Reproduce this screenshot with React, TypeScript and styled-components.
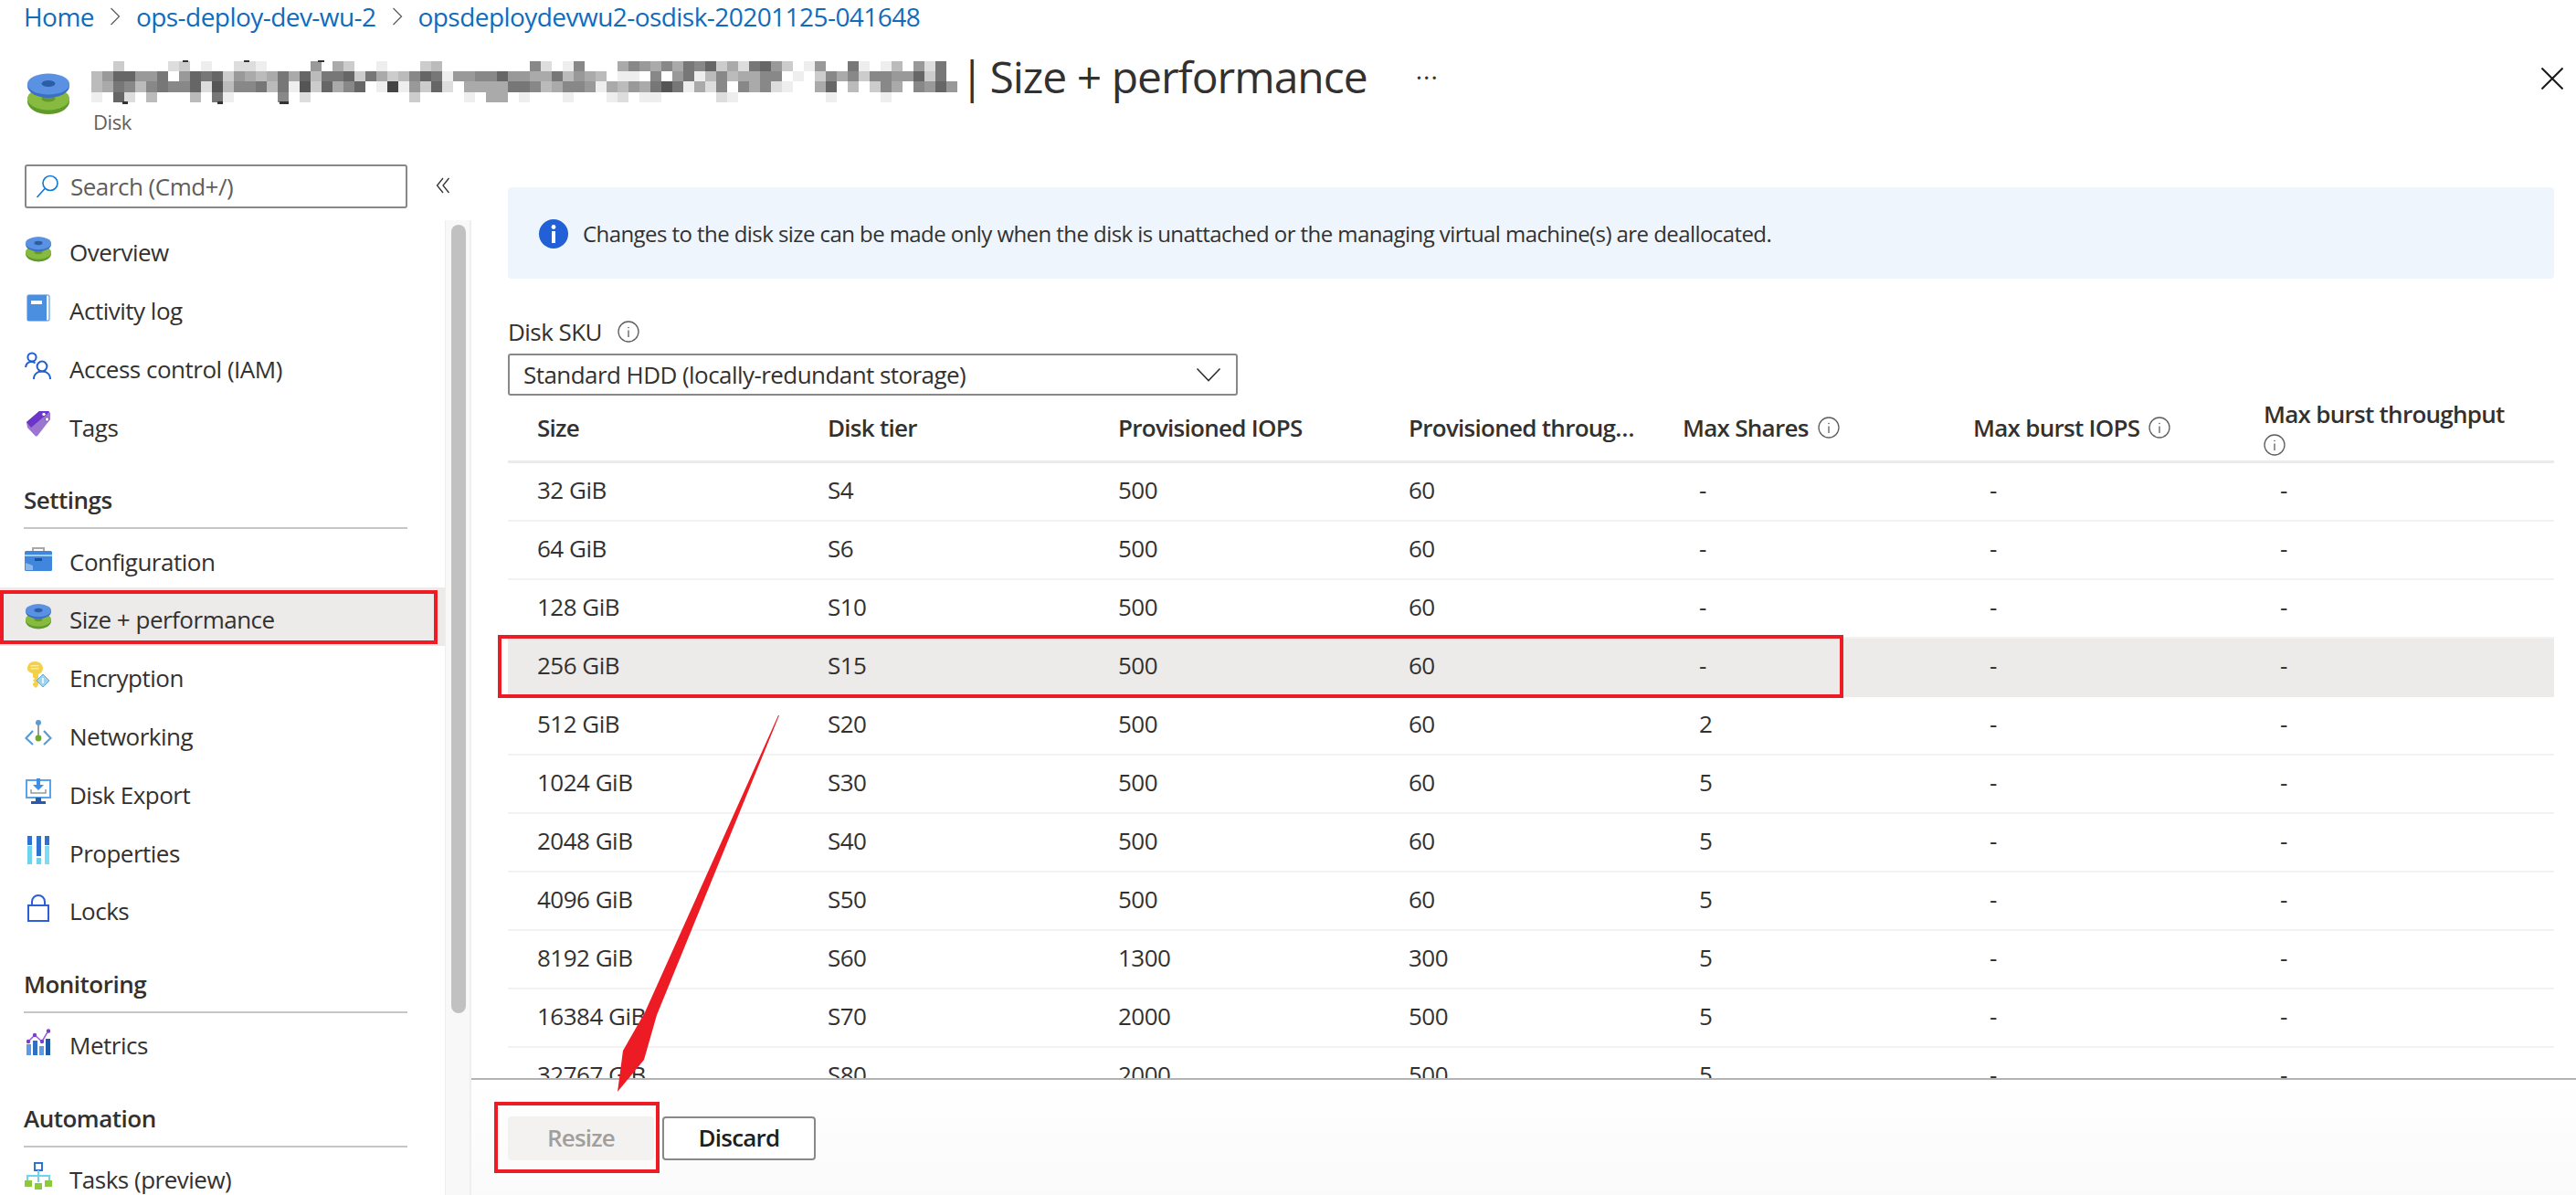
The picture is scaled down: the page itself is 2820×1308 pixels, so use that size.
import React from "react";
import styled, { createGlobalStyle } from "styled-components";

const GlobalStyle = createGlobalStyle`
  html, body {
    margin: 0;
    padding: 0;
    background: #fff;
  }
  body {
    font-family: "Open Sans", "Noto Sans", sans-serif;
    color: #323130;
  }
  * {
    box-sizing: border-box;
  }
`;

const Page = styled.div`
  position: relative;
  display: flex;
  flex-direction: column;
  width: 2820px;
  height: 1308px;
  overflow: hidden;
  background: #fff;
`;

const Breadcrumbs = styled.nav`
  display: flex;
  align-items: center;
  height: 36px;
  padding-left: 26px;
  gap: 17px;
  font-size: 28px;
  letter-spacing: -0.55px;
  color: #0f6cbd;
`;

const Crumb = styled.span`
  white-space: nowrap;
`;

const TitleRow = styled.header`
  display: flex;
  height: 142px;
  padding: 30px 14px 0 30px;
`;

const TitleIcon = styled.div`
  width: 46px;
  margin-right: 24px;
  padding-top: 14px;
`;

const TitleBlock = styled.div`
  display: flex;
  flex-direction: column;
`;

const TitleLine = styled.div`
  display: flex;
  align-items: flex-start;
  height: 50px;
`;

const TitlePipe = styled.span`
  margin: 0 7px 0 3px;
  font-size: 48px;
  line-height: 36px;
  letter-spacing: -1px;
  color: #323130;
`;

const TitleText = styled.h1`
  margin: 0;
  font-size: 48px;
  font-weight: 400;
  line-height: 36px;
  letter-spacing: -1px;
  color: #323130;
  white-space: nowrap;
`;

const MoreDots = styled.span`
  margin-left: 53px;
  font-size: 28px;
  line-height: 36px;
  letter-spacing: 1px;
  color: #323130;
`;

const Subtitle = styled.div`
  margin: 2px 0 0 2px;
  font-size: 22px;
  line-height: 30px;
  letter-spacing: -0.4px;
  color: #605e5c;
`;

const CloseButton = styled.div`
  margin-left: auto;
  padding-top: 8px;
`;

const Body = styled.div`
  display: flex;
  flex: 1;
  min-height: 0;
`;

const LeftPane = styled.aside`
  display: flex;
  flex-direction: column;
  width: 516px;
  flex-shrink: 0;
`;

const SearchRow = styled.div`
  display: flex;
  align-items: flex-start;
  height: 63px;
  padding: 2px 0 0 27px;
`;

const SearchBox = styled.div`
  display: flex;
  align-items: center;
  gap: 12px;
  width: 419px;
  height: 48px;
  padding-left: 10px;
  border: 2px solid #8a8886;
  border-radius: 3px;
  font-size: 26px;
  letter-spacing: -0.5px;
  color: #605e5c;
`;

const CollapseButton = styled.div`
  margin: 14px 0 0 31px;
`;

const NavArea = styled.div`
  display: flex;
  flex: 1;
  min-height: 0;
`;

const NavList = styled.div`
  width: 487px;
  flex-shrink: 0;
  overflow: hidden;
`;

const NavItem = styled.div<{ $active?: boolean }>`
  display: flex;
  align-items: center;
  height: 63.8px;
  padding: 7px 0 0 26px;
  font-size: 26px;
  letter-spacing: -0.5px;
  white-space: nowrap;
  color: #323130;
  background: ${(p) => (p.$active ? "#edebe9" : "transparent")};
`;

const NavIcon = styled.span`
  display: flex;
  justify-content: center;
  width: 32px;
  margin-right: 18px;
  margin-top: -7px;
`;

const SectionTitle = styled.div`
  display: flex;
  align-items: flex-end;
  height: 83px;
  margin: 0 41px 0 26px;
  padding-bottom: 12px;
  border-bottom: 2px solid #c8c6c4;
  font-size: 26px;
  font-weight: 600;
  line-height: 36px;
  letter-spacing: -0.5px;
  color: #323130;
`;

const ScrollGutter = styled.div`
  flex: 1;
  padding: 5px 4px 0 6px;
  background: #f8f8f8;
  border-left: 1px solid #eeeeee;
  border-right: 2px solid #eeeeee;
`;

const ScrollThumb = styled.div`
  height: 863px;
  border-radius: 8px;
  background: #c1c1c1;
`;

const Main = styled.main`
  display: flex;
  flex-direction: column;
  flex: 1;
  min-width: 0;
`;

const Content = styled.div`
  flex: 1;
  min-height: 0;
  overflow: hidden;
  padding: 27px 24px 0 40px;
`;

const InfoBanner = styled.div`
  display: flex;
  align-items: flex-start;
  gap: 16px;
  height: 100px;
  padding: 35px 0 0 34px;
  border-radius: 4px;
  background: #eff5fd;
  font-size: 24px;
  line-height: 32px;
  letter-spacing: -0.57px;
  color: #323130;
`;

const FieldLabel = styled.label`
  display: flex;
  align-items: center;
  gap: 17px;
  height: 32px;
  margin-top: 42px;
  font-size: 26px;
  letter-spacing: -0.55px;
  color: #323130;
`;

const SelectBox = styled.div`
  display: flex;
  align-items: center;
  justify-content: space-between;
  width: 799px;
  height: 46px;
  margin-top: 8px;
  padding: 0 16px 0 15px;
  border: 2px solid #8a8886;
  border-radius: 3px;
  font-size: 26px;
  letter-spacing: -0.56px;
  color: #323130;
`;

const COLUMNS = "318px 318px 318px 318px 318px 318px 1fr";

const TableHead = styled.div`
  display: grid;
  grid-template-columns: ${COLUMNS};
  height: 74px;
  padding-bottom: 2px;
  border-bottom: 3px solid #edebe9;
`;

const HeadCell = styled.div<{ $tight?: boolean }>`
  display: flex;
  align-items: center;
  flex-wrap: wrap;
  align-content: center;
  min-width: 0;
  gap: 5px 10px;
  padding: 0 28px 0 ${(p) => (p.$tight ? "14px" : "32px")};
  font-size: 26px;
  font-weight: 600;
  line-height: 34px;
  letter-spacing: -0.72px;
  color: #323130;
`;

const Truncated = styled.span`
  overflow: hidden;
  max-width: 100%;
  white-space: nowrap;
  text-overflow: ellipsis;
`;

const TableRow = styled.div<{ $selected?: boolean }>`
  display: grid;
  grid-template-columns: ${COLUMNS};
  align-items: center;
  height: 64px;
  padding-bottom: 4px;
  border-bottom: 2px solid ${(p) => (p.$selected ? "#edebe9" : "#f3f2f1")};
  background: ${(p) => (p.$selected ? "#edebe9" : "transparent")};
`;

const Cell = styled.div`
  padding-left: 32px;
  font-size: 26px;
  letter-spacing: -0.5px;
  color: #323130;
`;

const Footer = styled.footer`
  display: flex;
  gap: 9px;
  height: 128px;
  padding: 40px 0 0 40px;
  border-top: 2px solid #b3b3b3;
  background: linear-gradient(#ffffff, #fafafa);
`;

const Button = styled.button<{ $disabled?: boolean; $width: number }>`
  width: ${(p) => p.$width}px;
  height: 48px;
  padding: 0 0 2px;
  border: 2px solid ${(p) => (p.$disabled ? "#f3f2f1" : "#8a8886")};
  border-radius: 4px;
  background: ${(p) => (p.$disabled ? "#f3f2f1" : "#ffffff")};
  color: ${(p) => (p.$disabled ? "#a19f9d" : "#201f1e")};
  font-family: inherit;
  font-size: 26px;
  font-weight: 600;
  letter-spacing: -0.8px;
`;

// red marks someone drew on top of the screenshot
const Callout = styled.div<{ $x: number; $y: number; $w: number; $h: number }>`
  position: absolute;
  left: ${(p) => p.$x}px;
  top: ${(p) => p.$y}px;
  width: ${(p) => p.$w}px;
  height: ${(p) => p.$h}px;
  border: 4px solid #ed1c24;
  pointer-events: none;
`;

const ArrowLayer = styled.svg`
  position: absolute;
  left: 0;
  top: 0;
  pointer-events: none;
`;

const MOSAIC = [
  "ffcffffdcfeffddeffff9facffefffcbffffffff8dfe8fffa89a8a786cad769cfe9ff7efebf9d7f",
  "b966997f9676c9aba7a6b776c7acb867e9988699aa7b9abfeef8f97eb8baa88fefc8a8c88996c7f",
  "ba78b87886d5b887b7e5c6a86fe4e9c6dfaaaa778ba889eab9a757ead8f8a8deffa6fbfc8af8969",
  "ef6dfbfffbf7effff8fdfffffffffcffffefaafefffefffedfeefffffdeffffffffeffffefffff",
];
const MOSAIC_Y = [0, 11, 22, 34];
const MOSAIC_H = [11, 11, 12, 11];
const MOSAIC_TICKS = [
  [100, 0, 6, 2],
  [167, 0, 6, 2],
  [248, 0, 7, 2],
  [34, 45, 6, 3],
  [138, 45, 6, 3],
  [206, 45, 10, 3],
];

// the disk name was pixelated out in the original picture
const BlurredName = () => (
  <svg width="948" height="50" viewBox="0 0 948 50">
    {MOSAIC.map((row, r) =>
      row.split("").map((c, i) => {
        const v = parseInt(c, 16) * 17;
        if (v === 255) return null;
        return (
          <rect
            key={`${r}-${i}`}
            x={i * 12}
            y={MOSAIC_Y[r] + 1}
            width="12"
            height={MOSAIC_H[r]}
            fill={`rgb(${v},${v},${v})`}
          />
        );
      })
    )}
    {MOSAIC_TICKS.map((t, i) => (
      <rect key={i} x={t[0]} y={t[1]} width={t[2]} height={t[3]} fill="#333" />
    ))}
  </svg>
);

const DiskIcon = ({ size }: { size: number }) => (
  <svg width={size} height={size} viewBox="0 0 46 46">
    <ellipse cx="23" cy="31" rx="23" ry="14" fill="#5f9a2b" />
    <ellipse cx="23" cy="28" rx="23" ry="12.5" fill="#86bb3f" />
    <ellipse cx="23" cy="28" rx="7.5" ry="3.5" fill="#65982c" />
    <ellipse cx="23" cy="14" rx="23" ry="13" fill="#3a70c4" />
    <ellipse cx="23" cy="12" rx="23" ry="11.5" fill="#5a91e3" />
    <ellipse cx="23" cy="11.5" rx="7.5" ry="3.5" fill="#2b5ea3" />
  </svg>
);

const BookIcon = () => (
  <svg width="26" height="30" viewBox="0 0 26 30">
    <rect x="1" y="1" width="24" height="28" rx="2" fill="none" stroke="#7fb0e8" strokeWidth="1.5" />
    <path d="M1 3a2 2 0 0 1 2-2h19v28H1z" fill="#4a8fe0" />
    <rect x="5" y="7" width="12" height="4" fill="#fff" />
  </svg>
);

const PeopleIcon = () => (
  <svg width="30" height="30" viewBox="0 0 30 30" fill="none" stroke="#1f5fd0" strokeWidth="2">
    <circle cx="8" cy="6" r="4.6" />
    <path d="M1 17c.6-4 3-6 6.500-6 1.500 0 3 .5 4 1.500" />
    <circle cx="19" cy="16" r="5.400" />
    <path d="M10 30c0-5.500 4-8.500 9-8.500s9 3 9 8.500" />
  </svg>
);

const TagIcon = () => (
  <svg width="28" height="30" viewBox="0 0 28 30">
    <path d="M1 13 15 1h10l2 2v7L13 28a2 2 0 0 1-2.500 0L2 19z" fill="#9a76cf" />
    <path d="M1 13 15 1h10l1 1L6 19z" fill="#6c35c9" />
    <circle cx="20" cy="4.500" r="2.200" fill="#fff" stroke="#6c35c9" />
    <circle cx="23.500" cy="10" r="2.200" fill="#fff" stroke="#7a55b8" />
  </svg>
);

const BriefcaseIcon = () => (
  <svg width="30" height="27" viewBox="0 0 30 27">
    <path d="M9 6V2h12v4" fill="none" stroke="#a8a8a8" strokeWidth="2" />
    <rect x="0" y="5" width="30" height="22" rx="1.500" fill="#3f86dc" />
    <rect x="0" y="9" width="30" height="2" fill="#9fd0f5" />
    <rect x="11" y="13" width="8" height="3" fill="#1f4f96" />
    <path d="M1 18l8 3v5H1z" fill="#8ab7ea" />
  </svg>
);

const KeyIcon = () => (
  <svg width="26" height="30" viewBox="0 0 26 30">
    <path d="M9 0c5 0 9 3 9 7.500 0 3-2 5.500-5 6.500v12l-3 3-3-3v-2l2-1-2-2 2-2-2-2v-4C3.500 12.500 1 10.500 1 7.500 1 3 4.500 0 9 0z" fill="#f3d048" />
    <rect x="4.500" y="4" width="9" height="1.500" fill="#fbeaa0" />
    <rect x="4.500" y="7" width="9" height="1.500" fill="#fbeaa0" />
    <path d="M18 14l7 7-7 7-7-7z" fill="#9fd3ee" stroke="#5fa8d8" />
    <path d="M18 18v6" stroke="#fff" strokeWidth="1.500" />
  </svg>
);

const NetworkIcon = () => (
  <svg width="30" height="28" viewBox="0 0 30 28" fill="none">
    <path d="M9 12 1.500 20 9 27M21 12l7.500 8-7.500 7" stroke="#5a9bd4" strokeWidth="2.200" />
    <path d="M15 3v17" stroke="#7a7a7a" strokeWidth="1.500" />
    <circle cx="15" cy="3" r="3" fill="#5a9bd4" />
    <circle cx="15" cy="20" r="3.400" fill="#6fa82a" />
  </svg>
);

const MonitorIcon = () => (
  <svg width="28" height="28" viewBox="0 0 28 28">
    <rect x="1" y="2" width="26" height="19" fill="#fff" stroke="#5ba3ea" strokeWidth="2" />
    <rect x="11" y="21" width="6" height="4" fill="#2a5aa8" />
    <rect x="6" y="25" width="16" height="3" fill="#2a5aa8" />
    <path d="M12 0h4v7h4l-6 6-6-6h4z" fill="#3f8ee6" />
    <path d="M6 12v4h16v-4" fill="none" stroke="#9a9a9a" strokeWidth="1.500" />
  </svg>
);

const PropertiesIcon = () => (
  <svg width="24" height="31" viewBox="0 0 24 31">
    <rect x="0" y="0" width="5" height="10" fill="#2f72d0" />
    <rect x="0" y="11" width="5" height="20" fill="#6fd3ee" />
    <rect x="10" y="0" width="5" height="22" fill="#2f72d0" />
    <rect x="10" y="24" width="5" height="7" fill="#6fd3ee" />
    <rect x="19" y="0" width="5" height="10" fill="#2f72d0" />
    <rect x="19" y="11" width="5" height="20" fill="#7adcf5" />
  </svg>
);

const LockIcon = () => (
  <svg width="24" height="30" viewBox="0 0 24 30" fill="none" stroke="#2a5fd8" strokeWidth="2">
    <rect x="1" y="12" width="22" height="17" />
    <path d="M5 12V8a7 7 0 0 1 14 0v4" />
  </svg>
);

const MetricsIcon = () => (
  <svg width="26" height="29" viewBox="0 0 26 29">
    <rect x="0" y="17" width="5" height="12" fill="#5c9be8" />
    <rect x="7" y="13" width="5" height="16" fill="#2f6fc4" />
    <rect x="14" y="19" width="5" height="10" fill="#5c9be8" />
    <rect x="21" y="11" width="5" height="18" fill="#1f5aa8" />
    <path d="M2 14l7-7 8 7 7-12" fill="none" stroke="#9a5fdc" strokeWidth="1.500" />
    <circle cx="2" cy="14" r="2.200" fill="#7a3fd0" />
    <circle cx="9" cy="7" r="2.200" fill="#7a3fd0" />
    <circle cx="17" cy="14" r="2.200" fill="#7a3fd0" />
    <circle cx="24" cy="2.500" r="2.200" fill="#7a3fd0" />
  </svg>
);

const TasksIcon = () => (
  <svg width="30" height="30" viewBox="0 0 30 30">
    <rect x="11" y="1" width="8" height="8" fill="#fff" stroke="#2f72d0" strokeWidth="2" />
    <path d="M15 9v6M3 21v-6h24v6M15 15v7" fill="none" stroke="#6fd3ee" strokeWidth="2" />
    <rect x="0" y="20" width="8" height="7" fill="#8fc73e" />
    <rect x="11" y="23" width="8" height="7" fill="#8fc73e" />
    <rect x="22" y="20" width="8" height="7" fill="#8fc73e" />
  </svg>
);

const InfoDot = () => (
  <svg width="24" height="24" viewBox="0 0 24 24" fill="none" stroke="#605e5c">
    <circle cx="12" cy="12" r="11" strokeWidth="1.300" />
    <path d="M12 10.500V18" strokeWidth="1.300" />
    <circle cx="12" cy="7.500" r="0.800" fill="#605e5c" stroke="none" />
  </svg>
);

const SolidInfo = () => (
  <svg width="32" height="32" viewBox="0 0 32 32">
    <circle cx="16" cy="16" r="16" fill="#2160d6" />
    <rect x="14" y="13" width="4" height="13" fill="#fff" />
    <circle cx="16" cy="8.500" r="2.400" fill="#fff" />
  </svg>
);

const Chevron = () => (
  <svg width="12" height="20" viewBox="0 0 12 20" fill="none" stroke="#605e5c" strokeWidth="1.300">
    <path d="M1.500 1 10.500 10 1.500 19" />
  </svg>
);

const DoubleChevron = () => (
  <svg width="16" height="18" viewBox="0 0 16 18" fill="none" stroke="#323130" strokeWidth="1.300">
    <path d="M8 1 1.500 9 8 17M14.500 1 8 9l6.500 8" />
  </svg>
);

const SearchGlass = () => (
  <svg width="26" height="26" viewBox="0 0 26 26" fill="none" stroke="#0f78d4" strokeWidth="1.600">
    <circle cx="16" cy="9.500" r="8" />
    <path d="M10 15.500 1.500 25" />
  </svg>
);

const SelectChevron = () => (
  <svg width="28" height="16" viewBox="0 0 28 16" fill="none" stroke="#323130" strokeWidth="1.600">
    <path d="M1.500 1.500 14 14.500 26.500 1.500" />
  </svg>
);

const CloseIcon = () => (
  <svg width="24" height="24" viewBox="0 0 24 24" fill="none" stroke="#1b1a19" strokeWidth="2">
    <path d="M0.500 0.500 23.500 23.500M23.500 0.500 0.500 23.500" />
  </svg>
);

const ROWS = [
  ["32 GiB", "S4", "500", "60", "-"],
  ["64 GiB", "S6", "500", "60", "-"],
  ["128 GiB", "S10", "500", "60", "-"],
  ["256 GiB", "S15", "500", "60", "-"],
  ["512 GiB", "S20", "500", "60", "2"],
  ["1024 GiB", "S30", "500", "60", "5"],
  ["2048 GiB", "S40", "500", "60", "5"],
  ["4096 GiB", "S50", "500", "60", "5"],
  ["8192 GiB", "S60", "1300", "300", "5"],
  ["16384 GiB", "S70", "2000", "500", "5"],
  ["32767 GiB", "S80", "2000", "500", "5"],
];

const NavEntry = ({ icon, label, active }: { icon: React.ReactNode; label: string; active?: boolean }) => (
  <NavItem $active={active}>
    <NavIcon>{icon}</NavIcon>
    {label}
  </NavItem>
);

export default function App() {
  return (
    <Page>
      <GlobalStyle />
      <Breadcrumbs>
        <Crumb>Home</Crumb>
        <Chevron />
        <Crumb>ops-deploy-dev-wu-2</Crumb>
        <Chevron />
        <Crumb>opsdeploydevwu2-osdisk-20201125-041648</Crumb>
      </Breadcrumbs>

      <TitleRow>
        <TitleIcon>
          <DiskIcon size={46} />
        </TitleIcon>
        <TitleBlock>
          <TitleLine>
            <BlurredName />
            <TitlePipe>|</TitlePipe>
            <TitleText>Size + performance</TitleText>
            <MoreDots>···</MoreDots>
          </TitleLine>
          <Subtitle>Disk</Subtitle>
        </TitleBlock>
        <CloseButton>
          <CloseIcon />
        </CloseButton>
      </TitleRow>

      <Body>
        <LeftPane>
          <SearchRow>
            <SearchBox>
              <SearchGlass />
              Search (Cmd+/)
            </SearchBox>
            <CollapseButton>
              <DoubleChevron />
            </CollapseButton>
          </SearchRow>
          <NavArea>
            <NavList>
              <NavEntry icon={<DiskIcon size={28} />} label="Overview" />
              <NavEntry icon={<BookIcon />} label="Activity log" />
              <NavEntry icon={<PeopleIcon />} label="Access control (IAM)" />
              <NavEntry icon={<TagIcon />} label="Tags" />
              <SectionTitle>Settings</SectionTitle>
              <NavEntry icon={<BriefcaseIcon />} label="Configuration" />
              <NavEntry icon={<DiskIcon size={28} />} label="Size + performance" active />
              <NavEntry icon={<KeyIcon />} label="Encryption" />
              <NavEntry icon={<NetworkIcon />} label="Networking" />
              <NavEntry icon={<MonitorIcon />} label="Disk Export" />
              <NavEntry icon={<PropertiesIcon />} label="Properties" />
              <NavEntry icon={<LockIcon />} label="Locks" />
              <SectionTitle>Monitoring</SectionTitle>
              <NavEntry icon={<MetricsIcon />} label="Metrics" />
              <SectionTitle>Automation</SectionTitle>
              <NavEntry icon={<TasksIcon />} label="Tasks (preview)" />
            </NavList>
            <ScrollGutter>
              <ScrollThumb />
            </ScrollGutter>
          </NavArea>
        </LeftPane>

        <Main>
          <Content>
            <InfoBanner>
              <SolidInfo />
              Changes to the disk size can be made only when the disk is unattached or the managing virtual machine(s) are deallocated.
            </InfoBanner>
            <FieldLabel>
              Disk SKU
              <InfoDot />
            </FieldLabel>
            <SelectBox>
              Standard HDD (locally-redundant storage)
              <SelectChevron />
            </SelectBox>
            <TableHead>
              <HeadCell>Size</HeadCell>
              <HeadCell>Disk tier</HeadCell>
              <HeadCell>Provisioned IOPS</HeadCell>
              <HeadCell>
                <Truncated>Provisioned throughput</Truncated>
              </HeadCell>
              <HeadCell $tight>
                Max Shares <InfoDot />
              </HeadCell>
              <HeadCell $tight>
                Max burst IOPS <InfoDot />
              </HeadCell>
              <HeadCell $tight>
                Max burst throughput <InfoDot />
              </HeadCell>
            </TableHead>
            {ROWS.map((row) => (
              <TableRow key={row[0]} $selected={row[0] === "256 GiB"}>
                {row.map((value, i) => (
                  <Cell key={i}>{value}</Cell>
                ))}
                <Cell>-</Cell>
                <Cell>-</Cell>
              </TableRow>
            ))}
          </Content>
          <Footer>
            <Button $disabled $width={160}>
              Resize
            </Button>
            <Button $width={168}>Discard</Button>
          </Footer>
        </Main>
      </Body>

      <Callout $x={0} $y={646} $w={479} $h={59} />
      <Callout $x={545} $y={695} $w={1473} $h={69} />
      <Callout $x={541} $y={1206} $w={181} $h={78} />
      <ArrowLayer width="2820" height="1308" viewBox="0 0 2820 1308">
        <polygon
          points="853,783 719,1111 705,1160 676,1195 682,1150 706,1108 852,783"
          fill="#ed1c24"
        />
      </ArrowLayer>
    </Page>
  );
}
